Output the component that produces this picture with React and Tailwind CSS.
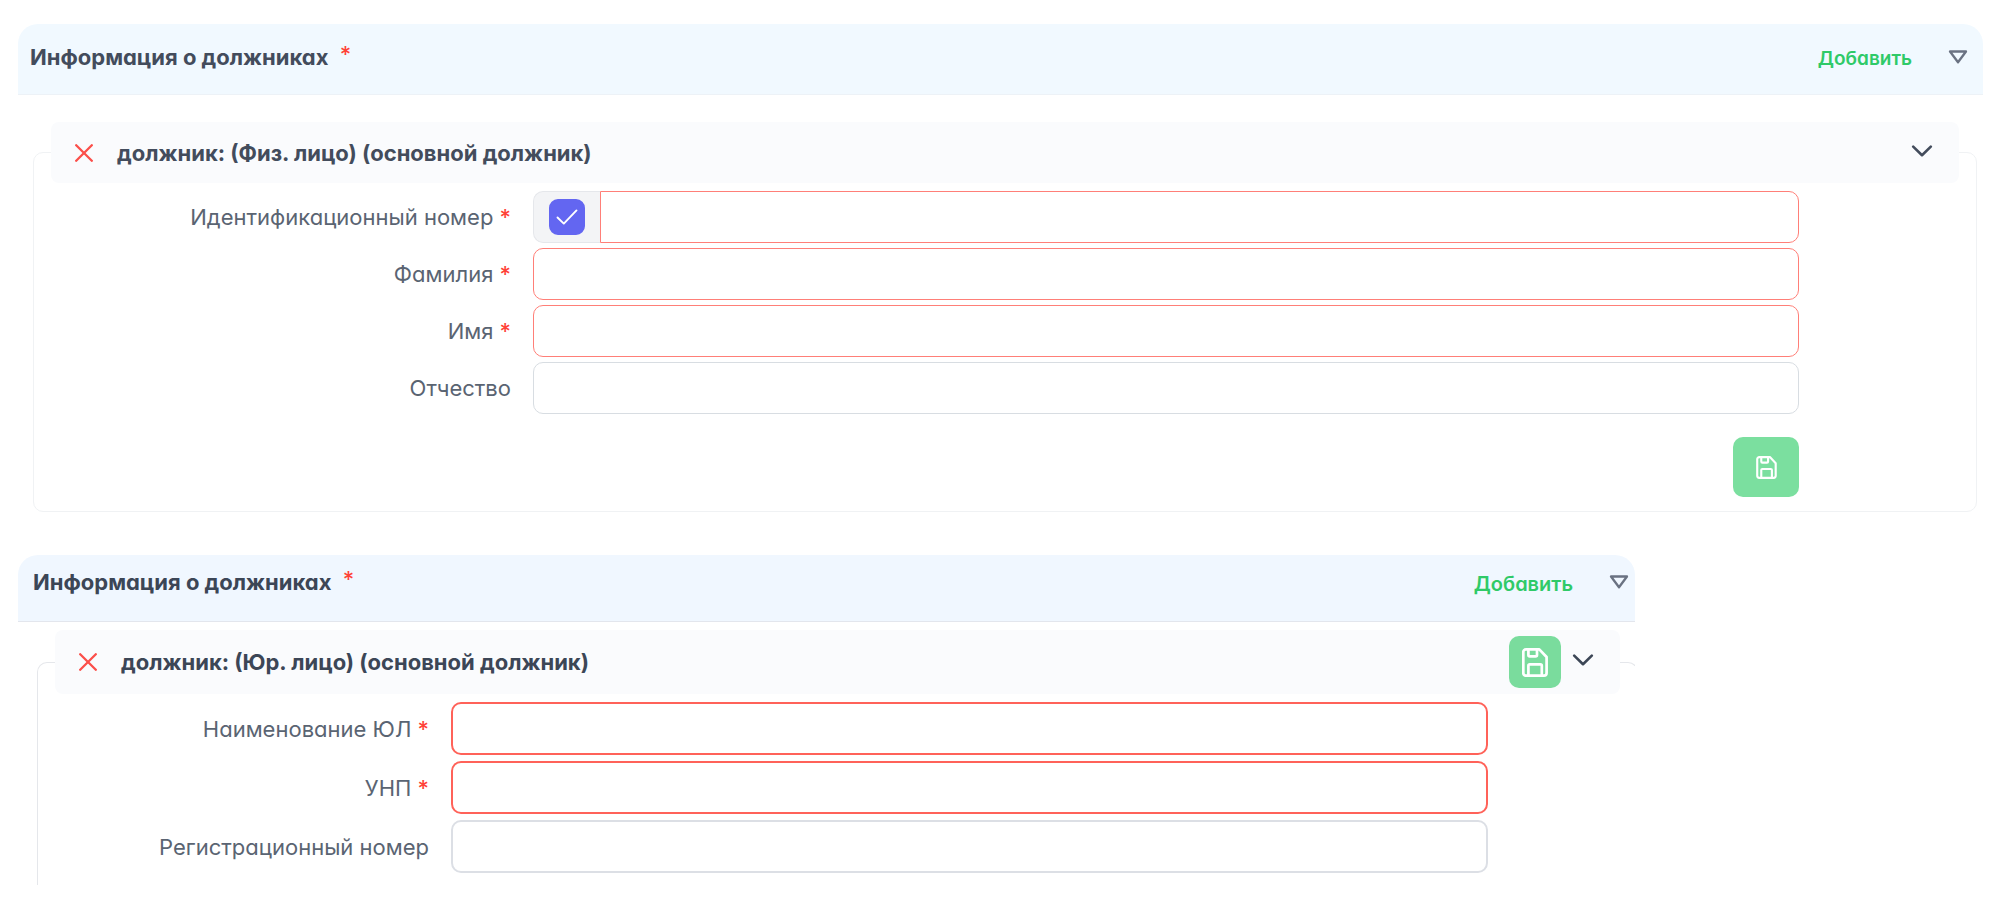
import { useState } from 'react'
import clsx from 'clsx'

const personFields = [
    { id: 'lastName', label: 'Фамилия', required: true },
    { id: 'firstName', label: 'Имя', required: true },
    { id: 'middleName', label: 'Отчество', required: false },
]

const companyFields = [
    { id: 'companyName', label: 'Наименование ЮЛ', required: true },
    { id: 'unp', label: 'УНП', required: true },
    { id: 'regNumber', label: 'Регистрационный номер', required: false },
]

function CloseIcon() {
    return (
        <svg className="h-[18px] w-[18px]" viewBox="0 0 18 18" fill="none" stroke="currentColor" strokeWidth="2.3" strokeLinecap="round">
            <path d="M1.2 1.2 16.8 16.8M16.8 1.2 1.2 16.8" />
        </svg>
    )
}

function ChevronIcon() {
    return (
        <svg className="h-3 w-[22px]" viewBox="0 0 22 12" fill="none" stroke="currentColor" strokeWidth="2.6" strokeLinecap="round" strokeLinejoin="round">
            <path d="M2.2 1.6 11 10.2 19.8 1.6" />
        </svg>
    )
}

function TriangleIcon() {
    return (
        <svg className="h-[14px] w-5" viewBox="0 0 20 14" fill="none" stroke="currentColor" strokeWidth="2.3" strokeLinejoin="round">
            <path d="M2 1.5H18L10 12.3Z" />
        </svg>
    )
}

function SaveIcon({ className }) {
    return (
        <svg className={className} viewBox="0 0 26 29" fill="none" stroke="currentColor" strokeWidth="2.7" strokeLinejoin="round">
            <path d="M3.9 1.4H17.3L24.6 9V25a2.6 2.6 0 0 1-2.6 2.6H3.9A2.6 2.6 0 0 1 1.3 25V4A2.6 2.6 0 0 1 3.9 1.4Z" />
            <path d="M6.4 1.5V6.9a1.4 1.4 0 0 0 1.4 1.4H13.6A1.4 1.4 0 0 0 15 6.9V1.5" />
            <path d="M6.4 27.5V17.8a1.4 1.4 0 0 1 1.4-1.4H18.4a1.4 1.4 0 0 1 1.4 1.4V27.5" />
        </svg>
    )
}

function Star() {
    return <span className="font-medium text-[#ff4238]">*</span>
}

function SectionHeader({ className, titleClass, addClass }) {
    return (
        <header className={clsx('flex items-center rounded-t-[20px] border-b', className)}>
            <h2 className={clsx('flex-1 font-bold', titleClass)}>
                Информация о должниках <sup className="top-0 ml-1.5 align-[3px] text-[22px] leading-none"><Star /></sup>
            </h2>
            <button type="button" className={clsx('pt-1 font-semibold text-[#2fca68]', addClass)}>Добавить</button>
            <button type="button" aria-label="Свернуть" className="ml-9 text-gray-500">
                <TriangleIcon />
            </button>
        </header>
    )
}

function FieldRow({ id, label, required, labelClass, children }) {
    return (
        <div className="flex items-center">
            <label htmlFor={id} className={clsx('shrink-0 text-right text-[#5a6472]', labelClass)}>
                {label} {required && <Star />}
            </label>
            {children}
        </div>
    )
}

function App() {
    const [hasNumber, setHasNumber] = useState(true)

    return (
        <main className="bg-white py-6 pl-[18px] font-[Inter,sans-serif] text-[22px] leading-8 [font-feature-settings:'cv11']">
            {/* физическое лицо */}
            <section className="mr-[17px]">
                <SectionHeader
                    className="h-[71px] border-[#edf2f7] bg-[#f1f9ff] pr-[15px] pb-1 pl-3"
                    titleClass="text-[#434c5c]"
                    addClass="text-[19px]"
                />
                <fieldset className="mt-[27px] mr-1.5 ml-[15px] rounded-[10px] border border-[#f0f2f4] px-[17px] pb-[14px]">
                    <legend className="flex h-[61px] w-full items-center rounded-lg bg-[#fafbfd] pr-6 pl-6 font-bold text-[#434c5c]">
                        <button type="button" aria-label="Удалить" className="mr-6 text-[#fb4f4a]">
                            <CloseIcon />
                        </button>
                        <span className="flex-1">должник: (Физ. лицо) (основной должник)</span>
                        <button type="button" aria-label="Развернуть" className="mr-0.5 pb-1">
                            <ChevronIcon />
                        </button>
                    </legend>
                    <div className="flex flex-col gap-[5px] pt-2 pr-[160px]">
                        <FieldRow id="idNumber" label="Идентификационный номер" required labelClass="w-[460px]">
                            <div className="ml-[22px] flex h-[52px] min-w-0 flex-1">
                                <span className="grid w-[67px] shrink-0 place-items-center rounded-l-[10px] border border-r-0 border-gray-200 bg-gray-100">
                                    <input
                                        type="checkbox"
                                        aria-label="Есть идентификационный номер"
                                        checked={hasNumber}
                                        onChange={(e) => setHasNumber(e.target.checked)}
                                        className="h-9 w-9 appearance-none rounded-[9px] border-2 border-[#6366f1] [grid-area:1/1] checked:bg-[#6366f1]"
                                    />
                                    {hasNumber && (
                                        <svg className="pointer-events-none h-4 w-[22px] text-white [grid-area:1/1]" viewBox="0 0 22 16" fill="none" stroke="currentColor" strokeWidth="1.9" strokeLinecap="round" strokeLinejoin="round">
                                            <path d="M1.5 8.5 7.8 14.6 20.5 1.4" />
                                        </svg>
                                    )}
                                </span>
                                <input id="idNumber" type="text" className="min-w-0 flex-1 rounded-r-[10px] border border-[#ff7f78] px-4 outline-none" />
                            </div>
                        </FieldRow>
                        {personFields.map((field) => (
                            <FieldRow key={field.id} {...field} labelClass="w-[460px]">
                                <input
                                    id={field.id}
                                    type="text"
                                    className={clsx('ml-[22px] h-[52px] min-w-0 flex-1 rounded-[10px] border px-4 outline-none', field.required ? 'border-[#ff7f78]' : 'border-[#d8dde2]')}
                                />
                            </FieldRow>
                        ))}
                        <button type="button" aria-label="Сохранить" className="mt-[18px] grid h-[60px] w-[66px] place-items-center self-end rounded-[10px] bg-[#7bdf9f] text-white">
                            <SaveIcon className="h-[23px] w-[21px]" />
                        </button>
                    </div>
                </fieldset>
            </section>

            {/* юридическое лицо */}
            <section className="mt-[43px] mr-[365px] overflow-hidden">
                <SectionHeader
                    className="h-[67px] border-[#e3e6ed] bg-[#f0f7ff] pr-1.5 pb-3 pl-[15px]"
                    titleClass="text-[#3c4656]"
                    addClass="text-[20px]"
                />
                <fieldset className="mt-2 -mr-[3px] ml-[19px] rounded-t-[10px] border border-b-0 border-gray-200 px-[17px] pb-3">
                    <legend className="flex h-16 w-full items-center rounded-lg bg-[#fafbfd] pr-6 pl-6 font-bold text-[#3c4656]">
                        <button type="button" aria-label="Удалить" className="mr-6 text-[#fb4f4a]">
                            <CloseIcon />
                        </button>
                        <span className="flex-1">должник: (Юр. лицо) (основной должник)</span>
                        <button type="button" aria-label="Сохранить" className="mr-[11px] grid h-[52px] w-[52px] place-items-center rounded-[10px] bg-[#7adc9d] text-white">
                            <SaveIcon className="h-[29px] w-[26px]" />
                        </button>
                        <button type="button" aria-label="Развернуть" className="mr-0.5 pb-1">
                            <ChevronIcon />
                        </button>
                    </legend>
                    <div className="flex flex-col gap-1.5 pt-2 pr-[132px]">
                        {companyFields.map((field) => (
                            <FieldRow key={field.id} {...field} labelClass="w-[374px]">
                                <input
                                    id={field.id}
                                    type="text"
                                    className={clsx('ml-[22px] h-[53px] min-w-0 flex-1 rounded-[10px] border-2 px-4 outline-none', field.required ? 'border-[#ff6259]' : 'border-[#dcdfe5]')}
                                />
                            </FieldRow>
                        ))}
                    </div>
                </fieldset>
            </section>
        </main>
    )
}

export default App
